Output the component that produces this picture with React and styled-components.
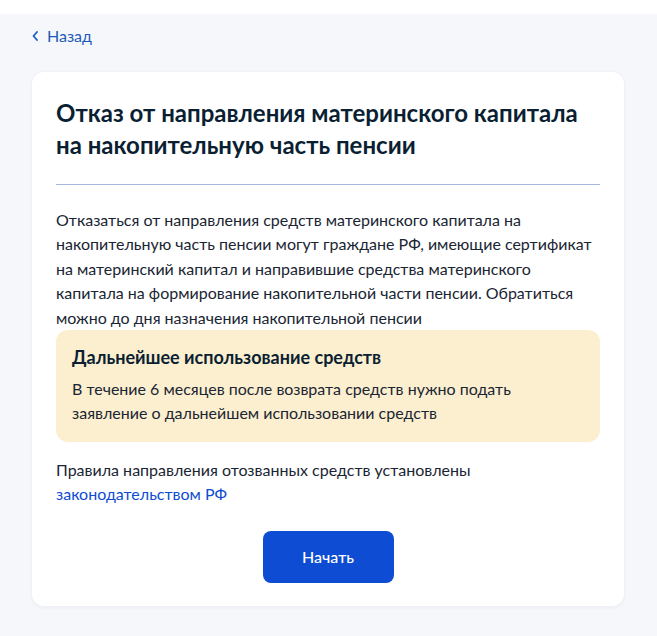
import styled, { createGlobalStyle } from 'styled-components'

const Global = createGlobalStyle`
    html, body {
        margin: 0;
        padding: 0;
        background: #ffffff;
    }
    body {
        font-family: Lato, "Noto Sans", Arial, sans-serif;
        color: #0b1f33;
        -webkit-font-smoothing: antialiased;
    }
`;

const Page = styled.main`
    margin-top: 14px;
    min-height: 622px;
    box-sizing: border-box;
    background: #f5f7fb;
    padding: 11px 32px 28px 32px;
`;

const Back = styled.a`
    display: inline-flex;
    align-items: center;
    gap: 9px;
    font-size: 16px;
    line-height: 22px;
    color: #1d5ab8;
    text-decoration: none;
    svg {
        display: block;
    }
`;

const Card = styled.section`
    margin-top: 25px;
    width: 592px;
    box-sizing: border-box;
    background: #ffffff;
    border-radius: 12px;
    box-shadow: 0 1px 4px rgba(11, 31, 51, 0.06);
    padding: 25px 24px 23px 24px;
    display: flex;
    flex-direction: column;
`;

const Title = styled.h1`
    margin: 0;
    font-size: 24px;
    line-height: 32px;
    font-weight: 700;
    color: #0b1f33;
`;

const Divider = styled.div`
    margin: 23px 0 23px 0;
    height: 1px;
    background: #aab5de;
`;

const Text = styled.p`
    margin: 0;
    font-size: 16px;
    line-height: 24.4px;
    color: #1a2533;
`;

const Notice = styled.div`
    background: #fcefcf;
    border-radius: 12px;
    padding: 15px 16px 16px 16px;
    display: flex;
    flex-direction: column;
    gap: 8px;
`;

const NoticeTitle = styled.h3`
    margin: 0;
    font-size: 18px;
    line-height: 24px;
    font-weight: 700;
    color: #0b1f33;
`;

const Rules = styled(Text)`
    margin-top: 16px;
    line-height: 24px;
`;

const Link = styled.a`
    color: #0d4cd3;
    text-decoration: none;
`;

const Actions = styled.div`
    display: flex;
    justify-content: center;
    margin-top: 25px;
`;

const Button = styled.button`
    width: 131px;
    height: 52px;
    border: 0;
    border-radius: 8px;
    background: #0d4cd3;
    color: #ffffff;
    font-family: Lato, "Noto Sans", Arial, sans-serif;
    font-size: 16px;
    font-weight: 500;
    cursor: pointer;
`;

const Chevron = () => (
    <svg width="6" height="10" viewBox="0 0 6 10" fill="none">
        <path d="M5 1L1.5 5L5 9" stroke="#1d5ab8" strokeWidth="1.8" strokeLinecap="round" strokeLinejoin="round" />
    </svg>
);

const App = () => (
    <>
        <Global />
        <Page>
            <Back href="#">
                <Chevron />
                Назад
            </Back>
            <Card>
                <Title>
                    Отказ от направления материнского капитала
                    <br />
                    на накопительную часть пенсии
                </Title>
                <Divider />
                <Text>
                    Отказаться от направления средств материнского капитала на
                    накопительную часть пенсии могут граждане РФ, имеющие сертификат
                    на материнский капитал и направившие средства материнского
                    капитала на формирование накопительной части пенсии. Обратиться
                    можно до дня назначения накопительной пенсии
                </Text>
                <Notice>
                    <NoticeTitle>Дальнейшее использование средств</NoticeTitle>
                    <Text>
                        В течение 6 месяцев после возврата средств нужно подать
                        <br />
                        заявление о дальнейшем использовании средств
                    </Text>
                </Notice>
                <Rules>
                    Правила направления отозванных средств установлены
                    <br />
                    <Link href="#">законодательством РФ</Link>
                </Rules>
                <Actions>
                    <Button>Начать</Button>
                </Actions>
            </Card>
        </Page>
    </>
);

export default App;
